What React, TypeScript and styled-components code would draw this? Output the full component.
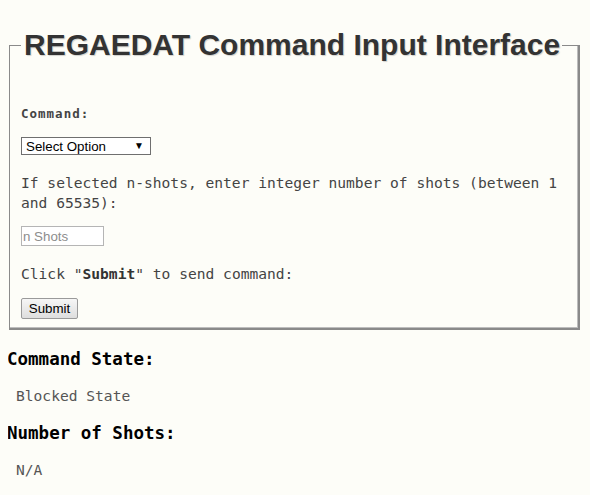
import React from "react";
import styled, { createGlobalStyle } from "styled-components";

const Global = createGlobalStyle`
  html, body { background: #fdfdf8; }
  body { margin: 8px; font-family: "DejaVu Sans Mono", monospace; color: #444; }
`;

const Frame = styled.fieldset`
  margin: 20px 2px 0 1px;
  padding: 0 11px 9px 11px;
  border-color: #8a8a8a;
  border-style: solid;
  border-width: 1px 2px 2px 1px;
  box-shadow: inset -1px -1px 0 #bdbdbd;
  min-width: 0;
`;

const Legend = styled.legend`
  margin-left: 0;
  padding: 0 2px 0 3px;
  font-family: "Liberation Sans", Arial, sans-serif;
  font-weight: bold;
  font-size: 30px;
  line-height: 34px;
  white-space: nowrap;
  color: #333;
  text-shadow: 1px 1px 1px rgba(0, 0, 0, 0.18);
`;

const Label = styled.div`
  margin-top: 44px;
  font-family: "DejaVu Sans Mono", monospace;
  font-weight: bold;
  font-size: 12.5px;
  letter-spacing: 1px;
  color: #444;
  line-height: 16px;
`;

const SelectBox = styled.div`
  margin-top: 15px;
  width: 130px;
  height: 18px;
  box-sizing: border-box;
  border: 1px solid #6f6f6f;
  background: #fff;
  display: flex;
  align-items: center;
  justify-content: space-between;
  padding: 0 6px 0 4px;
  font-family: "Liberation Sans", Arial, sans-serif;
  font-size: 13.33px;
  color: #000;
`;

const Arrow = styled.span`
  font-size: 10px;
  line-height: 1;
`;

const Text = styled.p<{ $top: number }>`
  margin: ${(p) => p.$top}px 0 0;
  font-family: "DejaVu Sans Mono", monospace;
  font-size: 14.6px;
  line-height: 20px;
  color: #444;
`;

const Strong = styled.b`
  font-weight: bold;
  color: #333;
`;

const ShotsInput = styled.input`
  display: block;
  margin-top: 13px;
  width: 83px;
  height: 20px;
  box-sizing: border-box;
  border: 1px solid #b5b5b5;
  background: #fff;
  padding: 0 1px;
  font-family: "Liberation Sans", Arial, sans-serif;
  font-size: 13.33px;
  color: #000;
  outline: none;
  &::placeholder { color: #8d8d8d; }
`;

const SubmitButton = styled.button`
  display: block;
  margin-top: 14px;
  width: 57px;
  height: 21px;
  box-sizing: border-box;
  border: 1px solid #9a9a9a;
  border-radius: 2px;
  background: linear-gradient(#f6f6f6, #dedede);
  padding: 0;
  font-family: "Liberation Sans", Arial, sans-serif;
  font-size: 13.33px;
  color: #000;
`;

const Heading = styled.h3<{ $top: number }>`
  margin: ${(p) => p.$top}px 0 0 -1px;
  font-family: "DejaVu Sans Mono", monospace;
  font-weight: bold;
  font-size: 17.5px;
  line-height: 22px;
  color: #000;
`;

const Value = styled.div<{ $top: number }>`
  margin: ${(p) => p.$top}px 0 0 8px;
  font-family: "DejaVu Sans Mono", monospace;
  font-size: 14.6px;
  line-height: 20px;
  color: #555;
`;

export default function App() {
  return (
    <>
      <Global />
      <Frame>
        <Legend>REGAEDAT Command Input Interface</Legend>
        <Label>Command:</Label>
        <SelectBox>
          <span>Select Option</span>
          <Arrow>▼</Arrow>
        </SelectBox>
        <Text $top={18}>
          If selected n-shots, enter integer number of shots (between 1 and 65535):
        </Text>
        <ShotsInput placeholder="n Shots" />
        <Text $top={18}>
          Click "<Strong>Submit</Strong>" to send command:
        </Text>
        <SubmitButton>Submit</SubmitButton>
      </Frame>
      <Heading $top={18}>Command State:</Heading>
      <Value $top={16}>Blocked State</Value>
      <Heading $top={16}>Number of Shots:</Heading>
      <Value $top={16}>N/A</Value>
    </>
  );
}
